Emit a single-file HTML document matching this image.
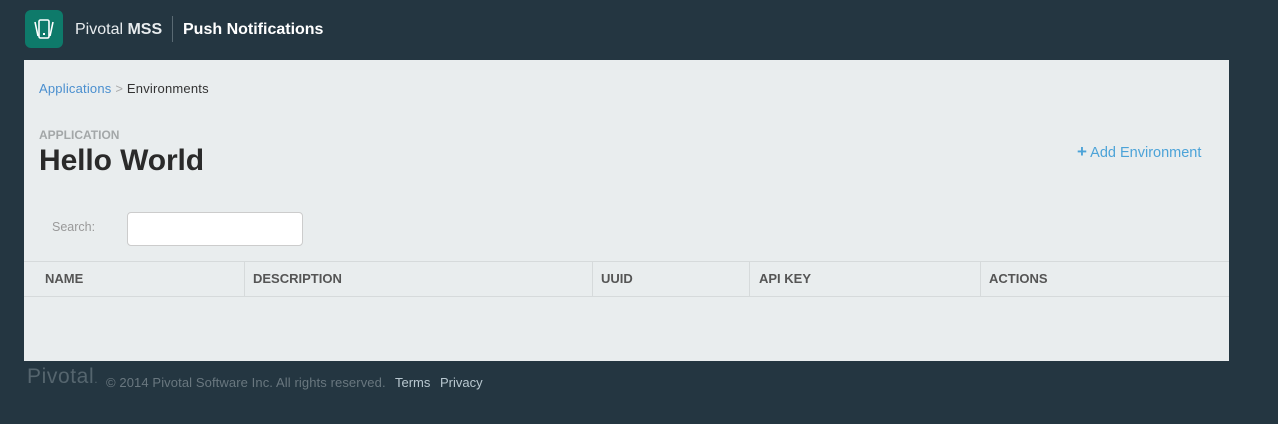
<!DOCTYPE html>
<html><head><style>
*{margin:0;padding:0;box-sizing:border-box}
body{width:1278px;height:424px;background:#243641;font-family:"Liberation Sans",sans-serif;position:relative;overflow:hidden}
.a{position:absolute;white-space:nowrap}
.panel{position:absolute;left:24px;top:60px;width:1205px;height:301px;background:#e9edee}
</style></head><body>
<div class="a" style="left:25px;top:10px;width:38px;height:38px;background:#0e7a6a;border-radius:6px">
<svg width="38" height="38" viewBox="0 0 38 38"><path d="M10 12 L13 26 M28 12 L25 26" stroke="#fff" stroke-width="1.6" fill="none"/><rect x="14" y="10" width="10" height="18" rx="1.5" stroke="#fff" stroke-width="1.6" fill="none"/><rect x="18" y="23" width="2" height="2" fill="#fff"/></svg></div>
<div class="a" style="left:75px;top:21px;font-size:16px;color:#e8ecee">Pivotal <b>MSS</b></div>
<div class="a" style="left:172px;top:16px;width:1px;height:26px;background:#5a6a73"></div>
<div class="a" style="left:183px;top:21px;font-size:16px;color:#fff;font-weight:bold">Push Notifications</div>
<div class="panel">
<div class="a" style="left:15px;top:21px;font-size:13px;color:#4a8fcf;letter-spacing:0.2px">Applications <span style="color:#aaa">&gt;</span> <span style="color:#333">Environments</span></div>
<div class="a" style="left:15px;top:68px;font-size:12px;font-weight:bold;color:#a3a7a8">APPLICATION</div>
<div class="a" style="left:15px;top:84px;font-size:30px;font-weight:bold;color:#2a2a2a;letter-spacing:-0.1px">Hello World</div>
<div class="a" style="left:1053px;top:82px;font-size:14.5px;color:#4ca3d8"><b style="font-size:17px">+</b> Add Environment</div>
<div class="a" style="left:28px;top:160px;font-size:12.5px;color:#999">Search:</div>
<div class="a" style="left:103px;top:152px;width:176px;height:34px;background:#fff;border:1px solid #ccc;border-radius:4px"></div>
<div class="a" style="left:0;top:201px;width:1205px;height:36px;border-top:1px solid #d6dadb;border-bottom:1px solid #d6dadb"></div>
<div class="a" style="left:220px;top:201px;width:1px;height:36px;background:#d6dadb"></div>
<div class="a" style="left:568px;top:201px;width:1px;height:36px;background:#d6dadb"></div>
<div class="a" style="left:725px;top:201px;width:1px;height:36px;background:#d6dadb"></div>
<div class="a" style="left:956px;top:201px;width:1px;height:36px;background:#d6dadb"></div>
<div class="a" style="left:21px;top:211px;font-size:13px;font-weight:bold;color:#555">NAME</div>
<div class="a" style="left:229px;top:211px;font-size:13px;font-weight:bold;color:#555">DESCRIPTION</div>
<div class="a" style="left:577px;top:211px;font-size:13px;font-weight:bold;color:#555">UUID</div>
<div class="a" style="left:735px;top:211px;font-size:13px;font-weight:bold;color:#555">API KEY</div>
<div class="a" style="left:965px;top:211px;font-size:13px;font-weight:bold;color:#555">ACTIONS</div>
</div>
<div class="a" style="left:27px;top:365px;font-size:21px;color:#55656e;letter-spacing:0.6px">Pivotal<span style="font-size:12px">.</span></div>
<div class="a" style="left:106px;top:375px;font-size:13px;color:#69777f;letter-spacing:0.1px">© 2014 Pivotal Software Inc. All rights reserved.</div>
<div class="a" style="left:395px;top:375px;font-size:13px;color:#b9c8d0">Terms</div>
<div class="a" style="left:440px;top:375px;font-size:13px;color:#b9c8d0">Privacy</div>
</body></html>
